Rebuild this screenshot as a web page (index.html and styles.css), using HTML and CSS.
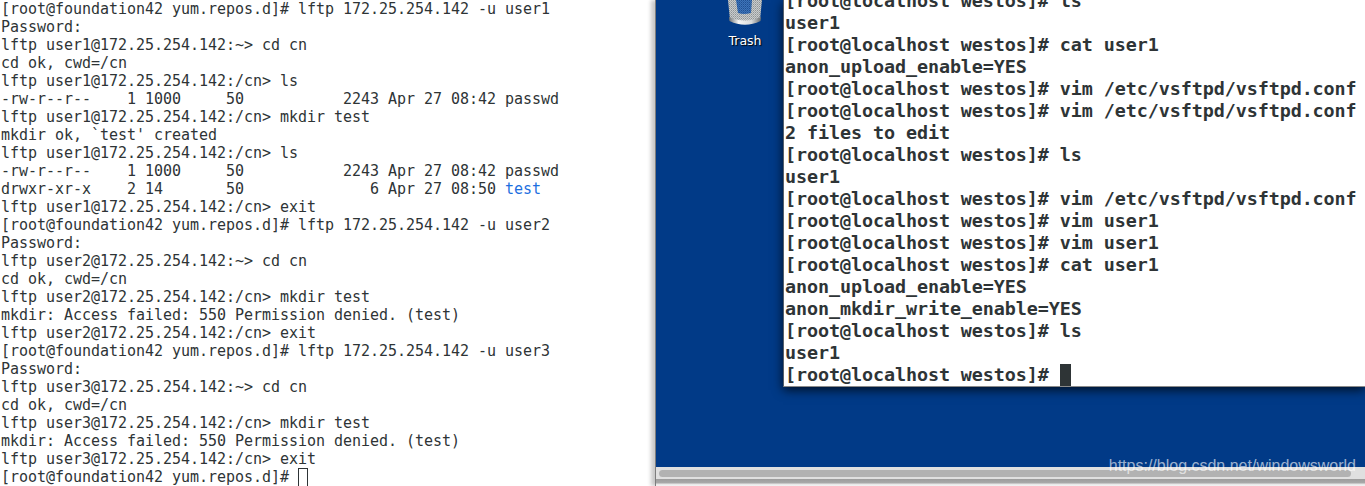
FILE: index.html
```html
<!DOCTYPE html>
<html lang="en">
<head>
<meta charset="utf-8">
<title>lftp session</title>
<link rel="stylesheet" href="styles.css">
</head>
<body>
<main class="screen">
<pre class="host-term">[root@foundation42 yum.repos.d]# lftp 172.25.254.142 -u user1
Password: 
lftp user1@172.25.254.142:~&gt; cd cn
cd ok, cwd=/cn
lftp user1@172.25.254.142:/cn&gt; ls
-rw-r--r--    1 1000     50           2243 Apr 27 08:42 passwd
lftp user1@172.25.254.142:/cn&gt; mkdir test
mkdir ok, `test' created
lftp user1@172.25.254.142:/cn&gt; ls
-rw-r--r--    1 1000     50           2243 Apr 27 08:42 passwd
drwxr-xr-x    2 14       50              6 Apr 27 08:50 <span class="dir">test</span>
lftp user1@172.25.254.142:/cn&gt; exit
[root@foundation42 yum.repos.d]# lftp 172.25.254.142 -u user2
Password: 
lftp user2@172.25.254.142:~&gt; cd cn
cd ok, cwd=/cn
lftp user2@172.25.254.142:/cn&gt; mkdir test
mkdir: Access failed: 550 Permission denied. (test)
lftp user2@172.25.254.142:/cn&gt; exit
[root@foundation42 yum.repos.d]# lftp 172.25.254.142 -u user3
Password: 
lftp user3@172.25.254.142:~&gt; cd cn
cd ok, cwd=/cn
lftp user3@172.25.254.142:/cn&gt; mkdir test
mkdir: Access failed: 550 Permission denied. (test)
lftp user3@172.25.254.142:/cn&gt; exit
[root@foundation42 yum.repos.d]# <span class="outline-cursor"></span></pre>
<section class="vm">
<div class="desktop">
<div class="trash">
<svg class="trash-icon" width="36" height="26" viewBox="0 0 36 26" aria-hidden="true">
<defs>
<pattern id="dither" width="2" height="2" patternUnits="userSpaceOnUse">
<rect width="2" height="2" fill="#c9cccd"/>
<rect width="1" height="1" fill="#8f9496"/>
<rect x="1" y="1" width="1" height="1" fill="#a5a9ab"/>
</pattern>
<pattern id="dither-blue" width="2" height="2" patternUnits="userSpaceOnUse">
<rect width="2" height="2" fill="#3e74b8"/>
<rect width="1" height="1" fill="#1f4f92"/>
<rect x="1" y="1" width="1" height="1" fill="#2b5fa4"/>
</pattern>
<linearGradient id="rim" x1="0" y1="0" x2="1" y2="0">
<stop offset="0" stop-color="#6f7376"/>
<stop offset="0.3" stop-color="#f4f5f5"/>
<stop offset="0.7" stop-color="#d8dadb"/>
<stop offset="1" stop-color="#6b6f72"/>
</linearGradient>
</defs>
<path d="M1 0 L3 20 Q18 27 33 20 L35 0 Z" fill="url(#dither)"/>
<path d="M9 0 H25 L24 13 Q17 15 11 13 Z" fill="url(#dither-blue)"/>
<path d="M2 17 Q18 24 34 17 L33.500 21 Q18 28.500 2.500 21 Z" fill="url(#rim)"/>
</svg>
<span class="trash-label">Trash</span>
</div>
<div class="window">
<pre class="guest-term">[root@localhost westos]# ls
user1
[root@localhost westos]# cat user1
anon_upload_enable=YES
[root@localhost westos]# vim /etc/vsftpd/vsftpd.conf
[root@localhost westos]# vim /etc/vsftpd/vsftpd.conf
2 files to edit
[root@localhost westos]# ls
user1
[root@localhost westos]# vim /etc/vsftpd/vsftpd.conf
[root@localhost westos]# vim user1
[root@localhost westos]# vim user1
[root@localhost westos]# cat user1
anon_upload_enable=YES
anon_mkdir_write_enable=YES
[root@localhost westos]# ls
user1
[root@localhost westos]# <span class="block-cursor"></span></pre>
</div>
</div>
<div class="scrollbar"><div class="thumb"></div></div>
<div class="vm-foot"></div>
<span class="watermark">https://blog.csdn.net/windowsworld</span>
</section>
</main>
</body>
</html>
```
FILE: styles.css
```css
* { box-sizing: border-box; }
html, body { margin: 0; padding: 0; background: #fff; }
.screen {
  display: flex;
  width: 1365px;
  height: 486px;
  overflow: hidden;
  background: #fff;
}
pre { margin: 0; }
.host-term {
  flex: 0 0 655px;
  font-family: "DejaVu Sans Mono", monospace;
  font-size: 15px;
  letter-spacing: -0.03px;
  line-height: 18px;
  color: #2e3436;
  padding-left: 1px;
  overflow: hidden;
}
.dir { color: #1c6fe0; }
.outline-cursor {
  display: inline-block;
  width: 10px;
  height: 20px;
  border: 1px solid #2e3436;
  border-bottom: 0;
  vertical-align: -6px;
}
.vm {
  position: relative;
  flex: 1;
  display: flex;
  flex-direction: column;
  height: 486px;
  border-left: 1px solid #7d7d7d;
  box-shadow: -4px 0 4px rgba(0, 0, 0, 0.22);
}
.desktop {
  position: relative;
  height: 467px;
  background: #013a87;
  overflow: hidden;
}
.trash {
  position: absolute;
  left: 53px;
  top: 0;
  width: 72px;
  display: flex;
  flex-direction: column;
  align-items: center;
}
.trash-icon { display: block; }
.trash-label {
  font-family: "DejaVu Sans", sans-serif;
  font-size: 12.500px;
  line-height: 16px;
  margin-top: 7px;
  color: #fff;
  text-shadow: 1px 1px 1px #000;
}
.window {
  position: absolute;
  left: 127px;
  top: 0;
  right: 0;
  height: 387px;
  background: #fff;
  border-left: 1px solid #55606c;
  border-bottom: 1px solid #8a8a8a;
  box-shadow: 0 3px 10px rgba(0, 0, 0, 0.75);
  overflow: hidden;
}
.guest-term {
  margin-top: -10px;
  padding-left: 1px;
  font-family: "DejaVu Sans Mono", monospace;
  font-weight: 700;
  font-size: 18.400px;
  letter-spacing: -0.08px;
  line-height: 22px;
  color: #2e3436;
}
.block-cursor {
  display: inline-block;
  width: 11px;
  height: 22px;
  background: #2e3436;
  vertical-align: -5px;
}
.scrollbar {
  height: 12px;
  background: #e0e0e0;
  padding: 3px 14px 2px 3px;
}
.thumb {
  height: 100%;
  background: #b2b2b2;
  border-radius: 4px;
}
.vm-foot {
  height: 7px;
  background: linear-gradient(#9c9c9c 0, #a9a9a9 4px, #e6e6e6 5px, #f4f4f4 7px);
}
.watermark {
  position: absolute;
  right: 9px;
  bottom: 11px;
  font-family: "Liberation Sans", Arial, sans-serif;
  font-size: 16px;
  line-height: 18px;
  color: rgba(255, 255, 255, 0.62);
}
```
